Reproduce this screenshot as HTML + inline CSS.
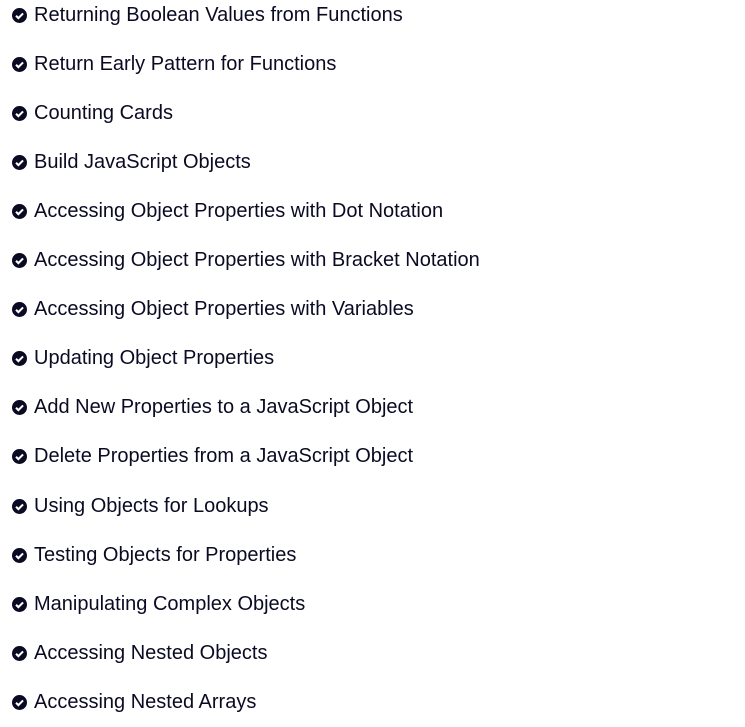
<!DOCTYPE html>
<html><head><style>
body{margin:0;background:#fff;width:745px;height:727px;overflow:hidden;font-family:"Liberation Sans",sans-serif;color:#0a0a23}
.r{position:absolute;left:12px;height:30px;display:flex;align-items:center;font-size:20px;white-space:nowrap}
.r svg{width:15px;height:15px;margin-right:7px;flex:none}
</style></head><body>
<div id="l"></div>
<script>
var t=["Returning Boolean Values from Functions","Return Early Pattern for Functions","Counting Cards","Build JavaScript Objects","Accessing Object Properties with Dot Notation","Accessing Object Properties with Bracket Notation","Accessing Object Properties with Variables","Updating Object Properties","Add New Properties to a JavaScript Object","Delete Properties from a JavaScript Object","Using Objects for Lookups","Testing Objects for Properties","Manipulating Complex Objects","Accessing Nested Objects","Accessing Nested Arrays"];
var h="";t.forEach(function(s,i){h+='<div class="r" style="top:'+(0+i*49.1)+'px"><svg viewBox="0 0 16 16"><circle cx="8" cy="8" r="8" fill="#0a0a23"/><path d="M4.3 8.3l2.5 2.5 5-5" stroke="#fff" stroke-width="2.2" fill="none"/></svg>'+s+'</div>'});
document.getElementById("l").innerHTML=h;
</script>
</body></html>
